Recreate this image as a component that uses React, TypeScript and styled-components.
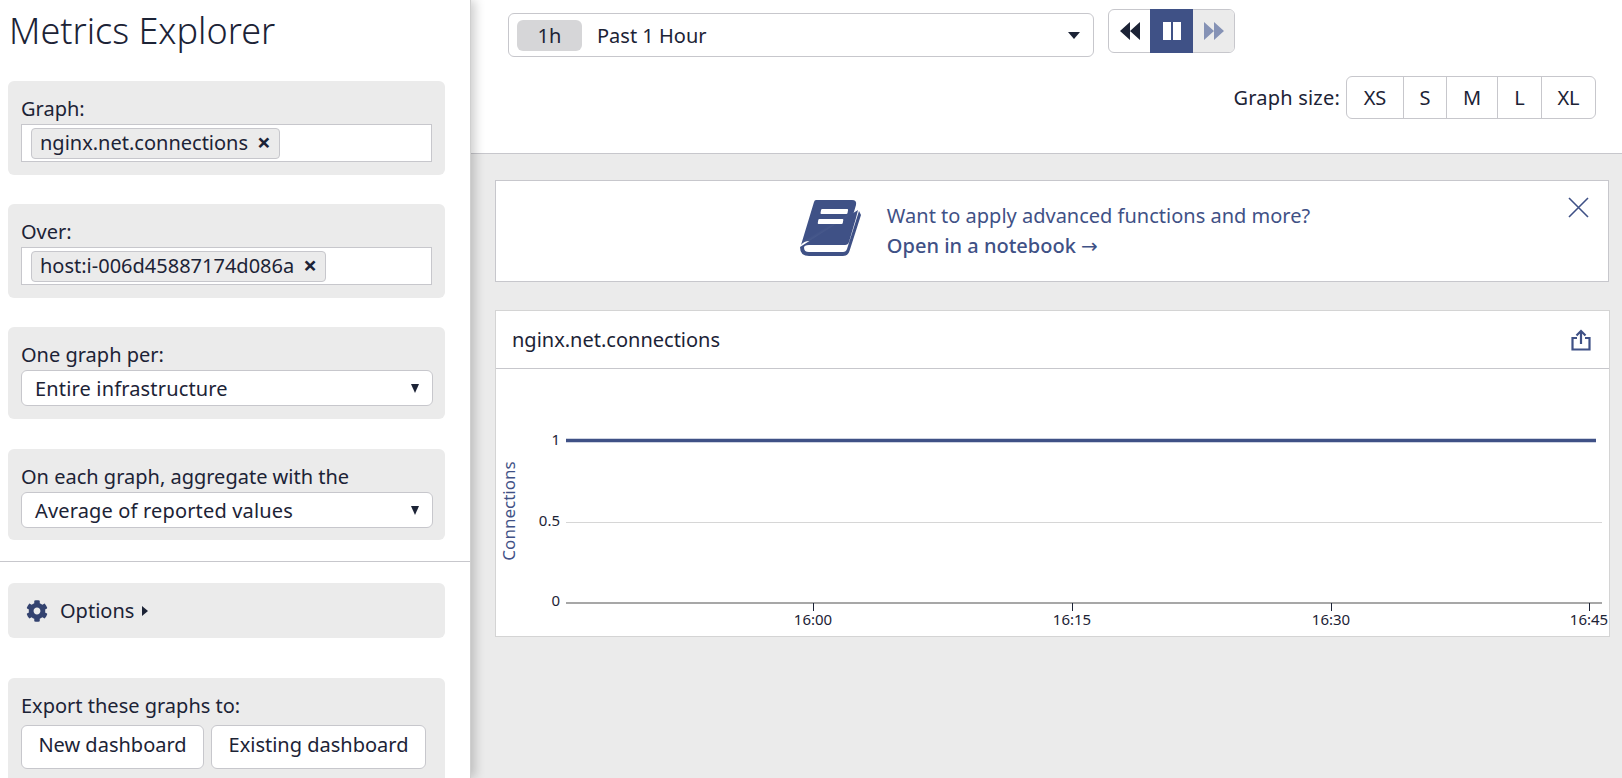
import React from "react";
import styled, { createGlobalStyle } from "styled-components";
import { FaCog } from "react-icons/fa";

const navy = "#3f5186";
const ink = "#1c2336";
const line = "#c7c7cc";

const GlobalStyle = createGlobalStyle`
  html, body {
    margin: 0;
    height: 100%;
    overflow: hidden;
    background: #ebebeb;
  }
  body {
    font-family: "Noto Sans", "Open Sans", sans-serif;
    color: ${ink};
  }
  * { box-sizing: border-box; }
`;

const Page = styled.div`
  display: flex;
  width: 1622px;
  height: 778px;
  overflow: hidden;
`;

const Sidebar = styled.aside`
  flex: none;
  width: 471px;
  height: 778px;
  background: #fff;
  border-right: 1px solid #cfcfcf;
  box-shadow: 4px 0 10px rgba(0, 0, 0, 0.2);
  position: relative;
  z-index: 1;
  overflow: hidden;
`;

const Title = styled.h1`
  margin: 0;
  padding: 6px 0 0 9px;
  height: 81px;
  font-size: 36px;
  line-height: 50px;
  font-weight: 300;
  color: ${ink};
`;

const Panel = styled.section<{ $h: number; $after: number }>`
  margin: 0 25px ${(p) => p.$after}px 8px;
  height: ${(p) => p.$h}px;
  padding: 12px 13px 0;
  background: #ebebeb;
  border-radius: 6px;
`;

const Label = styled.div`
  font-size: 20px;
  line-height: 32px;
  height: 31px;
`;

const TagInput = styled.div`
  display: flex;
  align-items: center;
  height: 38px;
  padding-left: 9px;
  background: #fff;
  border: 1px solid ${line};
`;

const Tag = styled.span`
  display: inline-flex;
  align-items: center;
  height: 31px;
  padding: 0 8px 2px 8px;
  gap: 9px;
  background: #ebebeb;
  border: 1px solid ${line};
  border-radius: 4px;
  font-size: 20px;
`;

const TagX = styled.span`
  font-size: 24px;
  font-weight: 700;
  line-height: 1;
`;

const SelectBox = styled.div`
  display: flex;
  align-items: center;
  justify-content: space-between;
  height: 36px;
  margin-right: -1px;
  padding: 0 13px;
  background: #fff;
  border: 1px solid ${line};
  border-radius: 6px;
  font-size: 20px;
  letter-spacing: 0.16px;
`;

const SmallCaret = styled.span`
  width: 0;
  height: 0;
  border-left: 4.5px solid transparent;
  border-right: 4.5px solid transparent;
  border-top: 9px solid ${ink};
`;

const Divider = styled.hr`
  margin: 0 0 21px;
  border: 0;
  border-top: 1px solid ${line};
`;

const OptionsPanel = styled.section`
  display: flex;
  align-items: center;
  height: 55px;
  margin: 0 25px 40px 8px;
  padding-left: 18px;
  background: #ebebeb;
  border-radius: 6px;
  font-size: 20px;
  color: #33426f;
`;

const OptionsText = styled.span`
  margin-left: 12px;
  color: ${ink};
`;

const RightCaret = styled.span`
  margin-left: 8px;
  width: 0;
  height: 0;
  border-top: 5px solid transparent;
  border-bottom: 5px solid transparent;
  border-left: 6px solid ${ink};
`;

const ExportRow = styled.div`
  display: flex;
  gap: 7px;
  margin-top: 4px;
`;

const ExportButton = styled.button<{ $w: number }>`
  width: ${(p) => p.$w}px;
  height: 44px;
  padding: 0 0 5px;
  background: #fff;
  border: 1px solid ${line};
  border-radius: 6px;
  font: inherit;
  font-size: 20px;
  color: ${ink};
`;

const Main = styled.main`
  flex: 1;
  min-width: 0;
`;

const Toolbar = styled.header`
  height: 154px;
  padding: 9px 26px 0 37px;
  background: #fff;
  border-bottom: 1px solid ${line};
`;

const TimeRow = styled.div`
  display: flex;
  gap: 14px;
`;

const TimeSelect = styled.div`
  display: flex;
  align-items: center;
  width: 586px;
  height: 44px;
  margin-top: 4px;
  padding: 0 13px 0 8px;
  background: #fff;
  border: 1px solid ${line};
  border-radius: 6px;
  font-size: 20px;
`;

const RangeChip = styled.span`
  width: 65px;
  height: 31px;
  margin-right: 15px;
  background: #d6d6d8;
  border-radius: 6px;
  text-align: center;
  line-height: 31px;
`;

const RangeText = styled.span`
  flex: 1;
`;

const WideCaret = styled.span`
  width: 0;
  height: 0;
  border-left: 6px solid transparent;
  border-right: 6px solid transparent;
  border-top: 7px solid ${ink};
`;

const PlayGroup = styled.div`
  display: flex;
  height: 44px;
  border: 1px solid ${line};
  border-radius: 6px;
`;

const PlayButton = styled.div<{ $state: "on" | "off" | "active" }>`
  display: flex;
  align-items: center;
  justify-content: center;
  width: ${(p) => (p.$state === "active" ? 43 : 41)}px;
  margin: ${(p) => (p.$state === "active" ? "-1px 0" : "0")};
  border-radius: ${(p) => (p.$state === "off" ? "0 5px 5px 0" : "0")};
  background: ${(p) =>
    p.$state === "active" ? navy : p.$state === "off" ? "#ebebeb" : "transparent"};
`;

const SizeRow = styled.div`
  display: flex;
  justify-content: flex-end;
  align-items: center;
  gap: 6px;
  margin-top: 19px;
  font-size: 20px;
`;

const SizeLabel = styled.span`
  letter-spacing: 0.2px;
`;

const SizeGroup = styled.div`
  display: flex;
  height: 43px;
  border: 1px solid ${line};
  border-radius: 6px;
`;

const SizeButton = styled.div<{ $w: number }>`
  width: ${(p) => p.$w}px;
  display: flex;
  align-items: center;
  justify-content: center;
  & + & {
    border-left: 1px solid ${line};
  }
`;

const Content = styled.div`
  padding: 26px 12px 0 24px;
`;

const Banner = styled.div`
  position: relative;
  display: flex;
  align-items: center;
  justify-content: center;
  gap: 25px;
  height: 102px;
  margin-right: 1px;
  padding-left: 6px;
  background: #fff;
  border: 1px solid ${line};
  color: ${navy};
  font-size: 20px;
  line-height: 30px;
`;

const BannerLink = styled.div`
  font-weight: 500;
`;

const Arrow = styled.span`
  font-family: "DejaVu Sans", sans-serif;
`;

const BookSvg = styled.svg`
  margin-bottom: 6px;
`;

const CloseButton = styled.svg`
  position: absolute;
  top: 16px;
  right: 19px;
`;

const GraphCard = styled.div`
  margin-top: 28px;
  height: 327px;
  background: #fff;
  border: 1px solid #d4d4d4;
`;

const GraphHead = styled.div`
  display: flex;
  align-items: center;
  justify-content: space-between;
  height: 58px;
  padding: 0 18px 0 16px;
  border-bottom: 1px solid ${line};
  font-size: 20px;
`;

const Chart = styled.svg`
  display: block;
`;

const ticks = [
  { x: 317, label: "16:00" },
  { x: 576, label: "16:15" },
  { x: 835, label: "16:30" },
  { x: 1093, label: "16:45" },
];

const Field = ({ label, tag }: { label: string; tag: string }) => (
  <>
    <Label>{label}</Label>
    <TagInput>
      <Tag>
        {tag}
        <TagX>×</TagX>
      </Tag>
    </TagInput>
  </>
);

const Dropdown = ({ label, value }: { label: string; value: string }) => (
  <>
    <Label>{label}</Label>
    <SelectBox>
      {value}
      <SmallCaret />
    </SelectBox>
  </>
);

const BookIcon = () => (
  <BookSvg width="62" height="58" viewBox="0 0 62 58">
    <defs>
      <linearGradient id="bookShade" x1="0.2" y1="0.1" x2="0.85" y2="1">
        <stop offset="0.5" stopColor={navy} />
        <stop offset="1" stopColor="#8a97b8" />
      </linearGradient>
    </defs>
    <path
      fill="url(#bookShade)"
      d="M16 1H52Q57 1 56 6L46 40Q45.500 42 43 42H9Q4 42 1 46L14 3Q14.500 1 16 1Z"
    />
    <path
      fill={navy}
      d="M0 48Q0 57 9 57H43Q48 57 49.500 52L61 16L59 12L47 50Q46 53 43 53H9Q4 53 4 48.500Q4 46 9 46H45Q48 46 49 43L56 19L58 11L0 48Z"
    />
    <rect x="21" y="10" width="27" height="5" rx="1" fill="#fff" transform="skewX(-10) translate(2 0)" />
    <rect x="18" y="20" width="25" height="5" rx="1" fill="#fff" transform="skewX(-10) translate(4 0)" />
  </BookSvg>
);

export default function App() {
  return (
    <Page>
      <GlobalStyle />
      <Sidebar>
        <Title>Metrics Explorer</Title>
        <Panel $h={94} $after={29}>
          <Field label="Graph:" tag="nginx.net.connections" />
        </Panel>
        <Panel $h={94} $after={29}>
          <Field label="Over:" tag="host:i-006d45887174d086a" />
        </Panel>
        <Panel $h={92} $after={30}>
          <Dropdown label="One graph per:" value="Entire infrastructure" />
        </Panel>
        <Panel $h={91} $after={21}>
          <Dropdown label="On each graph, aggregate with the" value="Average of reported values" />
        </Panel>
        <Divider />
        <OptionsPanel>
          <FaCog size={22} />
          <OptionsText>Options</OptionsText>
          <RightCaret />
        </OptionsPanel>
        <Panel $h={120} $after={0}>
          <Label>Export these graphs to:</Label>
          <ExportRow>
            <ExportButton $w={183}>New dashboard</ExportButton>
            <ExportButton $w={215}>Existing dashboard</ExportButton>
          </ExportRow>
        </Panel>
      </Sidebar>
      <Main>
        <Toolbar>
          <TimeRow>
            <TimeSelect>
              <RangeChip>1h</RangeChip>
              <RangeText>Past 1 Hour</RangeText>
              <WideCaret />
            </TimeSelect>
            <PlayGroup>
              <PlayButton $state="on">
                <svg width="20" height="20" viewBox="0 0 20 20" fill={ink}>
                  <path d="M10 1V19L0 10ZM20 1V19L10 10Z" />
                </svg>
              </PlayButton>
              <PlayButton $state="active">
                <svg width="20" height="20" viewBox="0 0 20 20" fill="#fff">
                  <path d="M1 1H9V19H1ZM11 1H19V19H11Z" />
                </svg>
              </PlayButton>
              <PlayButton $state="off">
                <svg width="20" height="20" viewBox="0 0 20 20" fill="#8592b5">
                  <path d="M0 1L10 10L0 19ZM10 1L20 10L10 19Z" />
                </svg>
              </PlayButton>
            </PlayGroup>
          </TimeRow>
          <SizeRow>
            <SizeLabel>Graph size:</SizeLabel>
            <SizeGroup>
              <SizeButton $w={56}>XS</SizeButton>
              <SizeButton $w={43}>S</SizeButton>
              <SizeButton $w={51}>M</SizeButton>
              <SizeButton $w={44}>L</SizeButton>
              <SizeButton $w={54}>XL</SizeButton>
            </SizeGroup>
          </SizeRow>
        </Toolbar>
        <Content>
          <Banner>
            <BookIcon />
            <div>
              <div>Want to apply advanced functions and more?</div>
              <BannerLink>
                Open in a notebook <Arrow>→</Arrow>
              </BannerLink>
            </div>
            <CloseButton width="21" height="21" viewBox="0 0 21 21" stroke={navy} strokeWidth="1.600">
              <path d="M1 1L20 20M20 1L1 20" />
            </CloseButton>
          </Banner>
          <GraphCard>
            <GraphHead>
              nginx.net.connections
              <svg width="20" height="22" viewBox="0 0 20 22" fill="none" stroke={navy} strokeWidth="2.200">
                <path d="M6 9H1.500V20.500H18.500V9H14" />
                <path d="M10 15V2M5.500 6.500L10 2L14.500 6.500" />
              </svg>
            </GraphHead>
            <Chart width="1113" height="267" viewBox="0 0 1113 267">
              <line x1="70" x2="1106" y1="153.500" y2="153.500" stroke="#d6d6d6" />
              <line x1="70" x2="1106" y1="234" y2="234" stroke="#8a8a8a" strokeWidth="1.500" />
              <line x1="70" x2="1100" y1="71.500" y2="71.500" stroke={navy} strokeWidth="3.500" />
              <g fontSize="15" fill={ink} fontFamily="Noto Sans" textAnchor="end">
                <text x="64" y="76">1</text>
                <text x="64" y="156.500">0.5</text>
                <text x="64" y="237">0</text>
              </g>
              <text
                transform="translate(19 142) rotate(-90)"
                textAnchor="middle"
                fontSize="17"
                fill={navy}
                fontFamily="Noto Sans"
              >
                Connections
              </text>
              {ticks.map((t) => (
                <g key={t.label}>
                  <line x1={t.x + 0.5} x2={t.x + 0.5} y1="234" y2="242" stroke={ink} />
                  <text x={t.x} y="256" textAnchor="middle" fontSize="15" fill={ink} fontFamily="Noto Sans">
                    {t.label}
                  </text>
                </g>
              ))}
            </Chart>
          </GraphCard>
        </Content>
      </Main>
    </Page>
  );
}
